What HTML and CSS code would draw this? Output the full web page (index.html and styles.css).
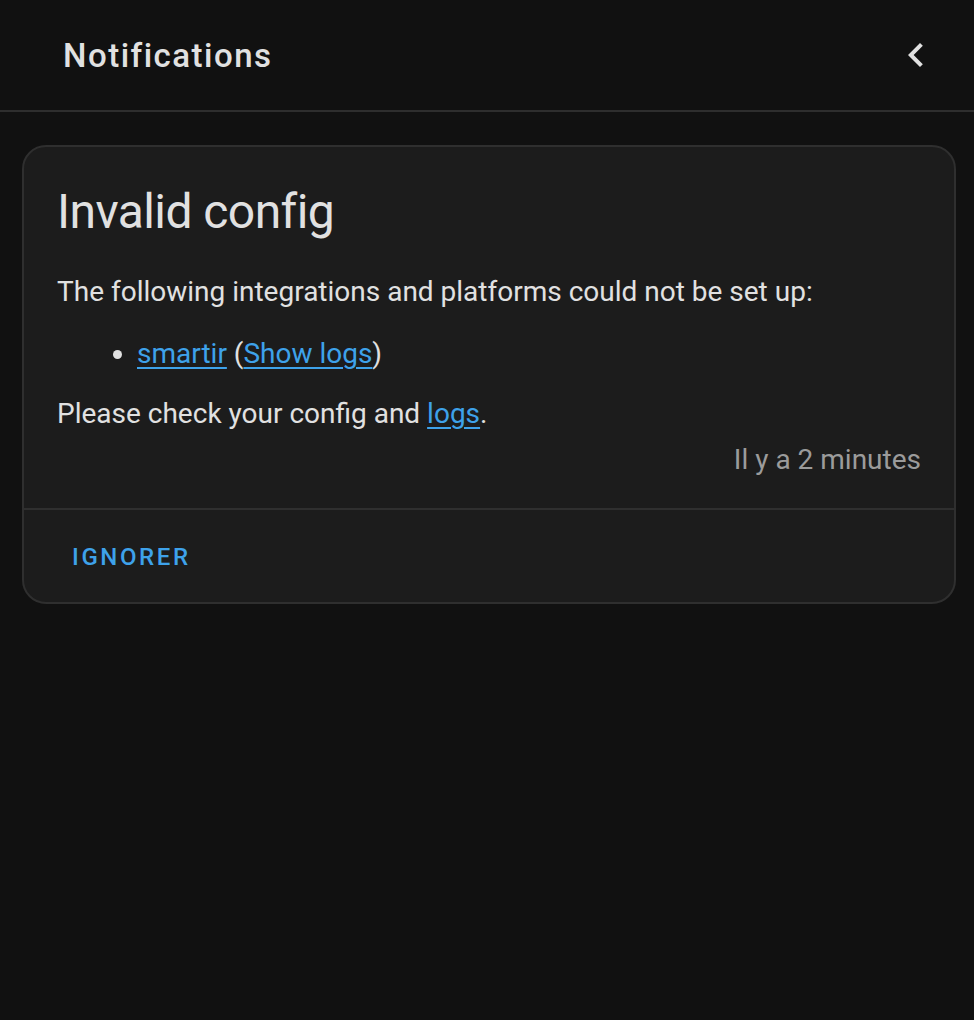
FILE: index.html
```html
<!DOCTYPE html>
<html lang="en">
<head>
<meta charset="utf-8">
<title>Notifications</title>
<link rel="stylesheet" href="styles.css">
</head>
<body>
<div class="drawer">
  <header class="header">
    <div class="header-title">Notifications</div>
    <button class="icon-btn" aria-label="Close">
      <svg viewBox="0 0 24 24" width="48" height="48"><path fill="currentColor" d="M15.41,16.58L10.83,12L15.41,7.41L14,6L8,12L14,18L15.41,16.58Z"/></svg>
    </button>
  </header>
  <div class="content">
    <div class="card">
      <div class="card-body">
        <h1 class="card-title">Invalid config</h1>
        <p class="para">The following integrations and platforms could not be set up:</p>
        <ul class="list">
          <li><a href="#" class="link">smartir</a> (<a href="#" class="link">Show logs</a>)</li>
        </ul>
        <p class="para para-tight">Please check your config and <a href="#" class="link">logs</a>.</p>
        <div class="time">Il y a 2 minutes</div>
      </div>
      <div class="card-actions">
        <button class="text-btn">Ignorer</button>
      </div>
    </div>
  </div>
</div>
</body>
</html>
```

FILE: styles.css
```css
html, body {
  margin: 0;
  padding: 0;
  background: #111111;
  color: #e1e1e1;
  font-family: Roboto, "Noto Sans", sans-serif;
}

.drawer {
  display: flex;
  flex-direction: column;
  min-height: 1020px;
}

.header {
  height: 110px;
  display: flex;
  align-items: center;
  justify-content: space-between;
  padding: 0 34px 0 63px;
  border-bottom: 2px solid #2e2e2e;
}

.header-title {
  margin-top: 2px;
  font-size: 33px;
  font-weight: 500;
  letter-spacing: 1.5px;
  color: #e1e1e1;
  line-height: 40px;
}

.icon-btn {
  width: 48px;
  height: 48px;
  padding: 0;
  border: 0;
  background: transparent;
  color: #e1e1e1;
  display: flex;
  align-items: center;
  justify-content: center;
}

.icon-btn svg {
  display: block;
}

.content {
  padding: 33px 18px 0 22px;
}

.card {
  background: #1c1c1c;
  border: 2px solid #2f2f2f;
  border-radius: 24px;
}

.card-body {
  padding: 33px 33px 28px 33px;
}

.card-title {
  margin: 0;
  font-size: 48px;
  font-weight: 400;
  letter-spacing: -0.012em;
  line-height: 64px;
  color: #e1e1e1;
}

.para {
  margin: 28px 0 0;
  font-size: 28px;
  line-height: 40px;
}

.para-tight {
  margin-top: 20px;
}

.list {
  margin: 22px 0 0;
  padding-left: 80px;
  font-size: 28px;
  line-height: 40px;
}

.link {
  color: #3ea2ea;
  text-decoration: underline;
  text-underline-offset: 4px;
  text-decoration-thickness: 2px;
}

.time {
  margin-top: 6px;
  text-align: right;
  font-size: 28px;
  line-height: 40px;
  color: #9b9b9b;
}

.card-actions {
  border-top: 2px solid #2f2f2f;
  padding: 11px 16px 9px 32px;
  display: flex;
}

.text-btn {
  height: 72px;
  padding: 0 16px;
  border: 0;
  background: transparent;
  color: #3ea2ea;
  font-family: Roboto, "Noto Sans", sans-serif;
  font-size: 24px;
  font-weight: 500;
  letter-spacing: 2.6px;
  text-transform: uppercase;
  line-height: 72px;
}
```
